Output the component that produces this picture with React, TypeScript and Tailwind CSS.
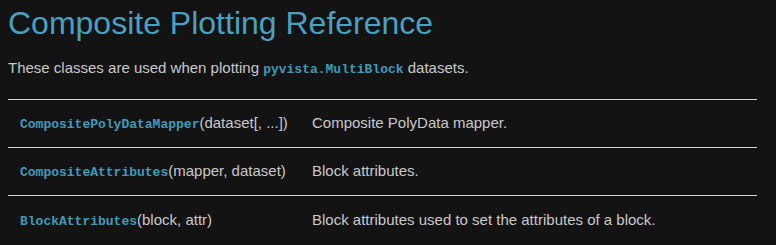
export default function App() {
  const rows = [
    { name: "CompositePolyDataMapper", args: "(dataset[, ...])", desc: "Composite PolyData mapper." },
    { name: "CompositeAttributes", args: "(mapper, dataset)", desc: "Block attributes." },
    { name: "BlockAttributes", args: "(block, attr)", desc: "Block attributes used to set the attributes of a block." },
  ];
  const mono = { fontFamily: '"Liberation Mono", monospace' };
  return (
    <div className="min-h-[245px] w-[776px] bg-[#131313] px-2 pt-[3px] text-[#c9c9c9]" style={{ fontFamily: '"Liberation Sans", Arial, sans-serif' }}>
      <h1 className="text-[32px] leading-[40px] text-[#4aa0c0]">Composite Plotting Reference</h1>
      <p className="mt-[15px] text-[15px] leading-[20px]">
        These classes are used when plotting{" "}
        <code className="font-bold text-[13px] text-[#3f9bbb]" style={mono}>
          pyvista.MultiBlock
        </code>{" "}
        datasets.
      </p>
      <table className="mt-[19px] w-[749px] table-fixed border-collapse text-[15px]">
        <colgroup>
          <col className="w-[292px]" />
          <col />
        </colgroup>
        <tbody>
          {rows.map((r) => (
            <tr key={r.name} className="border-t border-[#cfcfcf]">
              <td className="h-[48px] px-3 align-middle">
                <code className="font-bold text-[13px] text-[#3f9bbb]" style={mono}>
                  {r.name}
                </code>
                {r.args}
              </td>
              <td className="px-3 align-middle">{r.desc}</td>
            </tr>
          ))}
        </tbody>
      </table>
    </div>
  );
}
